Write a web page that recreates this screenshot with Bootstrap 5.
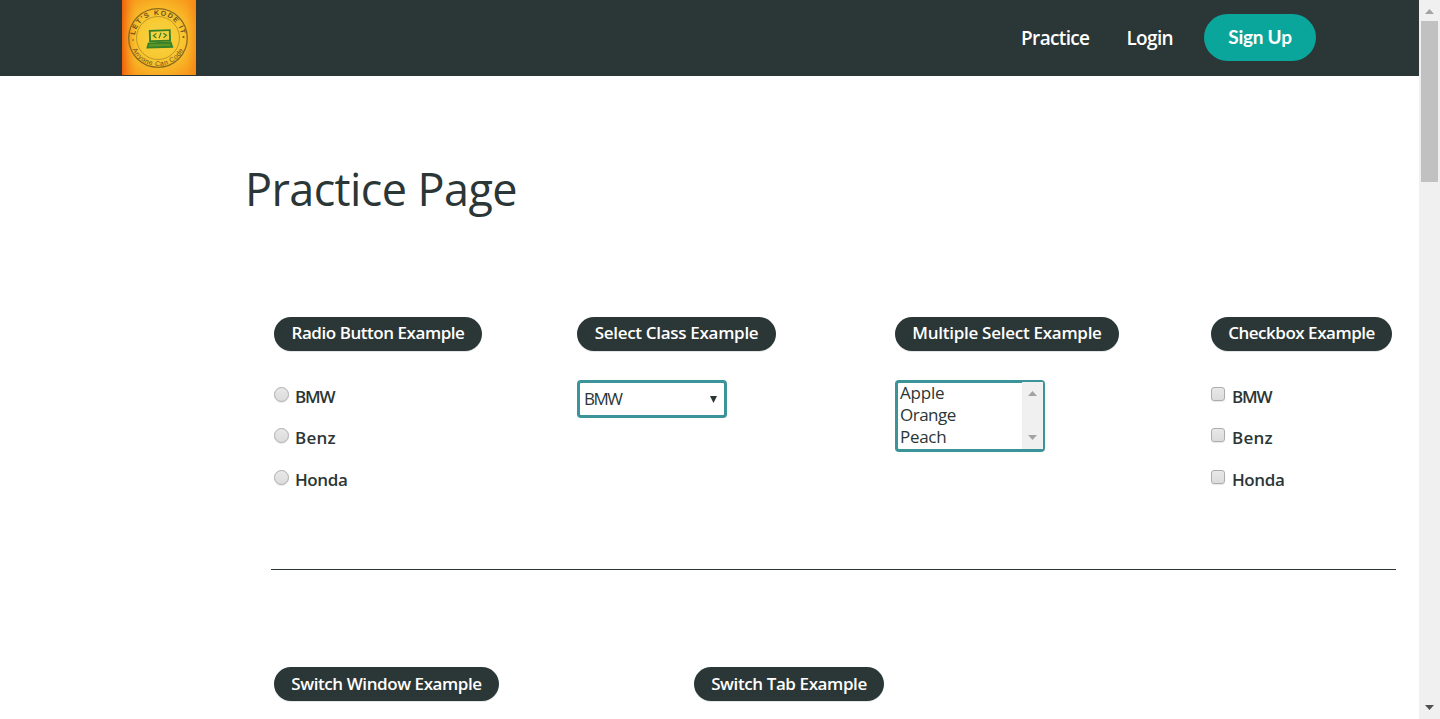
<!DOCTYPE html>
<html lang="en">
<head>
<meta charset="utf-8">
<meta name="viewport" content="width=device-width, initial-scale=1">
<title>Practice Page</title>
<link href="https://cdn.jsdelivr.net/npm/bootstrap@5.3.0/dist/css/bootstrap.min.css" rel="stylesheet">
<style>
:root{--ink:#2b3636;--teal:#3a9499}
body{font-family:"Trebuchet MS","Open Sans",sans-serif;font-size:17px;color:var(--ink);background:#fff}
.topbar{height:76px;background:var(--ink);padding:0 103px 0 122px}
.logo{width:74px;height:75px;display:block}
.topbar .nav-link{color:#fff;font-size:19px;font-weight:600;line-height:28px;padding:0;letter-spacing:-.65px}
.btn-signup{width:112px;height:47px;background:#0aa59b;color:#fff;font:700 19px/46px Lato,sans-serif;padding:0;border:0;letter-spacing:-.25px}
.btn-signup:hover{background:#088c84;color:#fff}
.page{padding:84px 0 0 245px}
h1{font-size:45px;line-height:58px;font-weight:400;letter-spacing:-.6px;margin:0}
.examples{display:grid;padding-left:29px}
.row-a{grid-template-columns:303px 318px 316px auto;margin-top:99px;height:252px;align-items:start}
.row-b{grid-template-columns:420px auto;margin-top:97px}
.row-b .pill{line-height:34px}
.pill{height:34px;border-radius:17px;background:var(--ink);color:#fff;font-size:17px;font-weight:600;line-height:32px;text-align:center;white-space:nowrap;margin:0;box-shadow:0 1px 0 #e3e5e5}
.choice{height:42px;font-weight:600;line-height:24px;gap:6px}
.choices{margin-top:34px}
.choices .choice:first-child{height:41px}
.choice input{appearance:none;border:1px solid #adadad;background:linear-gradient(#e8e8e8,#dcdcdc);box-shadow:0 1px 1px #00000018;margin:2px 0 0;flex:none}
.choice input[type=radio]{width:15px;height:15px;border-radius:50%}
.choice input[type=checkbox]{width:14px;height:14px;border-radius:3px;margin-right:1px}
.box{width:150px;border:3px solid var(--teal);border-radius:4px;margin-top:29px;background:#fff}
.one{height:38px;padding:0 7px 0 4px}
.many{height:72px;line-height:22px}
.bar-mini{width:21px;background:#f0f0f0;padding:9px 0;margin:-1px -1px 0 0}
.rule{height:1px;background:var(--ink);margin:0 23px 0 26px}
.bar-page{width:21px;background:#f0f0f0;padding:9px 0}
.thumb{width:17px;height:161px;background:#c1c1c1;margin-top:7px}
</style>
</head>
<body class="d-flex vh-100 overflow-hidden">
<div class="flex-grow-1 overflow-hidden">
  <nav class="topbar d-flex justify-content-between align-items-start">
    <a href="#" aria-label="Home"><svg class="logo" viewBox="0 0 74 75">
      <defs>
        <radialGradient id="sun" r=".62"><stop offset="0" stop-color="#f4d644"/><stop offset=".5" stop-color="#f9c62f"/><stop offset="1" stop-color="#f7991b"/></radialGradient>
        <linearGradient id="edge" x2="1"><stop offset="0" stop-color="#ec4c08" stop-opacity=".75"/><stop offset=".2" stop-color="#f89a18" stop-opacity="0"/><stop offset=".85" stop-color="#f89a18" stop-opacity="0"/><stop offset="1" stop-color="#f46b0d" stop-opacity=".4"/></linearGradient>
        <path id="arcTop" d="M14 46A23.300 23.300 0 1 1 58 46"/>
        <path id="arcLow" d="M8.200 42A28.100 28.100 0 0 0 63.800 42"/>
      </defs>
      <rect width="74" height="75" fill="url(#sun)"/><rect width="74" height="75" fill="url(#edge)"/>
      <g fill="none" stroke="#8b6a1d"><circle cx="36" cy="38" r="29.300" stroke-width="1.300"/><circle cx="36" cy="38" r="21.500" stroke-width=".7" opacity=".75"/></g>
      <g font-family="Liberation Sans" fill="#67501a">
        <text font-size="7" font-weight="700" text-anchor="middle" letter-spacing="1.300"><textPath href="#arcTop" startOffset="50%">LET'S KODE IT</textPath></text>
        <text font-size="6.800" text-anchor="middle" letter-spacing=".55"><textPath href="#arcLow" startOffset="50%">Anyone Can Code</textPath></text>
      </g>
      <circle cx="11" cy="40" r=".8" fill="#71581d"/><circle cx="61.500" cy="37" r="1.100" fill="#71581d"/>
      <g transform="rotate(-2 37 38)" fill="none" stroke="#368027" stroke-width="1.900"><path d="M28 30.500h20v10.500H28z"/><path d="M26.500 43h22l1.300 4.200H25.200z" fill="#5c962b"/><path d="M34.500 33.300l-3 2.300 3 2.300M41.500 33.300l3 2.300-3 2.300M39.200 32.800l-2.200 5.500" stroke-width="1.200"/></g>
    </svg></a>
    <div class="d-flex">
      <a class="nav-link" href="#" style="margin:24px 37px 0 0">Practice</a>
      <a class="nav-link" href="#" style="margin:24px 31px 0 0">Login</a>
      <a class="btn btn-signup rounded-pill" href="#" style="margin-top:14px">Sign Up</a>
    </div>
  </nav>
  <main class="page">
    <h1>Practice Page</h1>
    <div class="examples row-a">
      <section>
        <h2 class="pill" style="width:208px;letter-spacing:-.45px">Radio Button Example</h2>
        <div class="choices">
          <label class="choice d-flex"><input type="radio" name="car"><span style="letter-spacing:-1.2px">BMW</span></label>
          <label class="choice d-flex"><input type="radio" name="car"><span style="letter-spacing:.2px">Benz</span></label>
          <label class="choice d-flex"><input type="radio" name="car"><span style="letter-spacing:-.4px">Honda</span></label>
        </div>
      </section>
      <section>
        <h2 class="pill" style="width:199px;letter-spacing:-.3px">Select Class Example</h2>
        <div class="box one d-flex align-items-center justify-content-between" role="combobox" tabindex="0"><span style="letter-spacing:-1.500px">BMW</span><svg width="7" height="7"><path d="M0 0h7L3.500 7z" fill="#2b3636"/></svg></div>
      </section>
      <section>
        <h2 class="pill" style="width:224px;letter-spacing:-.27px">Multiple Select Example</h2>
        <div class="box many d-flex justify-content-between" role="listbox" tabindex="0">
          <div style="padding-left:2px;margin-top:-1px"><div role="option" style="letter-spacing:-.2px">Apple</div><div role="option" style="letter-spacing:-.5px">Orange</div><div role="option" style="letter-spacing:-.3px">Peach</div></div>
          <div class="bar-mini d-flex flex-column justify-content-between align-items-center"><svg width="9" height="5"><path d="M0 5L4.500 0 9 5z" fill="#a3a3a3"/></svg><svg width="9" height="5"><path d="M0 0h9L4.500 5z" fill="#a3a3a3"/></svg></div>
        </div>
      </section>
      <section>
        <h2 class="pill" style="width:181px;letter-spacing:-.48px">Checkbox Example</h2>
        <div class="choices">
          <label class="choice d-flex"><input type="checkbox"><span style="letter-spacing:-1.200px">BMW</span></label>
          <label class="choice d-flex"><input type="checkbox"><span style="letter-spacing:.2px">Benz</span></label>
          <label class="choice d-flex"><input type="checkbox"><span style="letter-spacing:-.4px">Honda</span></label>
        </div>
      </section>
    </div>
    <div class="rule"></div>
    <div class="examples row-b">
      <h2 class="pill" style="width:225px;letter-spacing:-.42px">Switch Window Example</h2>
      <h2 class="pill" style="width:190px;letter-spacing:-.4px">Switch Tab Example</h2>
    </div>
  </main>
</div>
<div class="bar-page flex-shrink-0 d-flex flex-column align-items-center" aria-hidden="true">
  <svg width="9" height="5"><path d="M0 5L4.500 0 9 5z" fill="#a3a3a3"/></svg>
  <div class="thumb"></div>
  <svg class="mt-auto" width="9" height="5"><path d="M0 0h9L4.500 5z" fill="#505050"/></svg>
</div>
<script src="https://cdn.jsdelivr.net/npm/bootstrap@5.3.0/dist/js/bootstrap.bundle.min.js"></script>
</body>
</html>
